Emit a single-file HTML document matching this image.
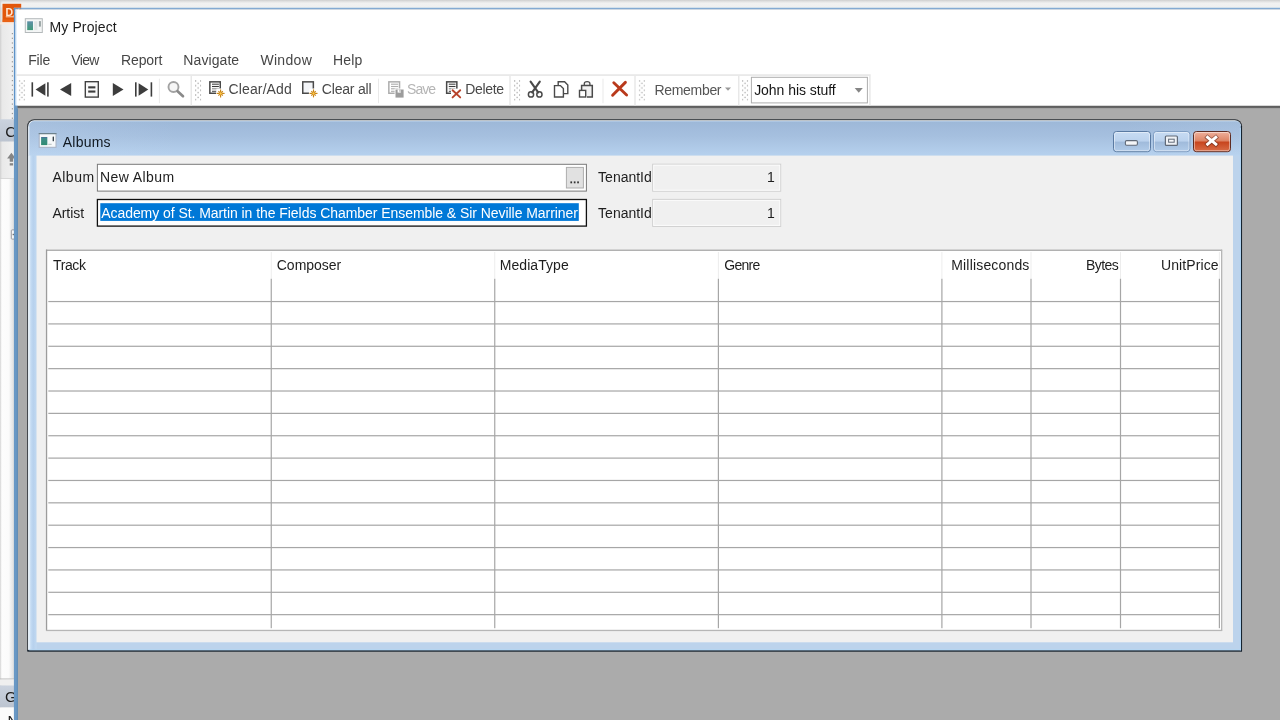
<!DOCTYPE html>
<html><head><meta charset="utf-8"><title>My Project</title>
<style>
html,body{margin:0;padding:0;background:#ababab;}
body{width:1280px;height:720px;overflow:hidden;font-family:"Liberation Sans",sans-serif;}
svg{display:block;position:absolute;left:0;top:0;will-change:transform;}
svg text{font-family:"Liberation Sans",sans-serif;white-space:pre;}
</style></head><body>
<svg width="1280" height="720" viewBox="0 0 1280 720">
<defs>
<linearGradient id="gTop" x1="0" y1="0" x2="0" y2="1"><stop offset="0" stop-color="#cfcfcf"/><stop offset="0.18" stop-color="#e2e2e2"/><stop offset="0.36" stop-color="#f1f1f1"/><stop offset="0.72" stop-color="#f0f0f0"/><stop offset="1" stop-color="#e2e2e2"/></linearGradient>
<linearGradient id="gLeft" x1="0" y1="0" x2="1" y2="0"><stop offset="0" stop-color="#dedede"/><stop offset="0.15" stop-color="#e9e9e9"/><stop offset="1" stop-color="#f1f1f1"/></linearGradient>
<linearGradient id="gTitle" x1="0" y1="0" x2="0" y2="1"><stop offset="0" stop-color="#9db8d8"/><stop offset="0.45" stop-color="#a6c0df"/><stop offset="1" stop-color="#b6d1ee"/></linearGradient>
<linearGradient id="gTitleL" x1="0" y1="0" x2="1" y2="0"><stop offset="0" stop-color="#cfe2f6" stop-opacity="0.18"/><stop offset="1" stop-color="#cfe2f6" stop-opacity="0"/></linearGradient>
<linearGradient id="gTitleR" x1="1" y1="0" x2="0" y2="0"><stop offset="0" stop-color="#cfe2f6" stop-opacity="0.12"/><stop offset="1" stop-color="#cfe2f6" stop-opacity="0"/></linearGradient>
<linearGradient id="gDark" x1="0" y1="0" x2="0" y2="1"><stop offset="0" stop-color="#c8c8c8"/><stop offset="0.3" stop-color="#5e5e5e"/><stop offset="0.7" stop-color="#666666"/><stop offset="1" stop-color="#ababab"/></linearGradient>
<linearGradient id="gBtn" x1="0" y1="0" x2="0" y2="1"><stop offset="0" stop-color="#c8dcf3"/><stop offset="0.47" stop-color="#bbd2ed"/><stop offset="0.53" stop-color="#a0bbdb"/><stop offset="1" stop-color="#b2cce9"/></linearGradient>
<linearGradient id="gClose" x1="0" y1="0" x2="0" y2="1"><stop offset="0" stop-color="#efb29e"/><stop offset="0.46" stop-color="#dd8465"/><stop offset="0.53" stop-color="#c8451e"/><stop offset="1" stop-color="#d96f49"/></linearGradient>
<linearGradient id="gIcon" x1="0" y1="0" x2="0" y2="1"><stop offset="0" stop-color="#5f8fa8"/><stop offset="1" stop-color="#3f9a78"/></linearGradient>
<linearGradient id="gIcon2" x1="0" y1="0" x2="0" y2="1"><stop offset="0" stop-color="#4a6a9a"/><stop offset="0.2" stop-color="#3f8d88"/><stop offset="1" stop-color="#2f8c72"/></linearGradient>
<linearGradient id="gLeftW" x1="0" y1="0" x2="1" y2="0"><stop offset="0" stop-color="#fdfdfd"/><stop offset="0.6" stop-color="#fbfbfb"/><stop offset="1" stop-color="#dcdcdc"/></linearGradient>
<linearGradient id="gTab" x1="0" y1="0" x2="0" y2="1"><stop offset="0" stop-color="#cad2de"/><stop offset="1" stop-color="#bcc4d0"/></linearGradient>
<linearGradient id="gBandL" x1="0" y1="0" x2="1" y2="0"><stop offset="0" stop-color="#eef6fd"/><stop offset="0.17" stop-color="#e0edf9"/><stop offset="0.3" stop-color="#c4dbf3"/><stop offset="0.6" stop-color="#b7d1ed"/><stop offset="1" stop-color="#c0d8f1"/></linearGradient>
<pattern id="grip" x="0" y="0" width="5" height="4.7" patternUnits="userSpaceOnUse"><rect x="0" y="0.3" width="1.25" height="1.25" fill="#a4a4a4"/><rect x="2.5" y="2.65" width="1.25" height="1.25" fill="#a4a4a4"/></pattern>
</defs>
<rect x="0" y="0" width="1280" height="720" fill="#ababab"/>
<rect x="0" y="0" width="1280" height="9" fill="url(#gTop)"/>
<rect x="0" y="8" width="14.5" height="712" fill="url(#gLeft)"/>
<rect x="0" y="178.5" width="14.5" height="500.5" fill="url(#gLeftW)"/>
<rect x="0" y="178" width="14.5" height="1" fill="#d8d8d8"/>
<rect x="0" y="0" width="1.2" height="720" fill="#d0d0d0" opacity="0.7"/>
<rect x="0" y="119.3" width="14.5" height="22.2" fill="url(#gTab)"/>
<rect x="0" y="678.5" width="14.5" height="1" fill="#b8b8b8"/>
<rect x="0" y="679.5" width="14.5" height="6" fill="#efefef"/>
<rect x="0" y="685.5" width="14.5" height="22" fill="url(#gTab)"/>
<rect x="0" y="707.5" width="14.5" height="13" fill="#fbfbfb"/>
<text x="5.2" y="136.6" font-size="15" fill="#1a1a1a" text-anchor="start">C</text>
<text x="5" y="702" font-size="15" fill="#1a1a1a" text-anchor="start">G</text>
<text x="7.5" y="726" font-size="15" fill="#1a1a1a" text-anchor="start">N</text>
<rect x="11.8" y="33.0" width="1.2" height="1.2" fill="#9a9a9a"/>
<rect x="11.8" y="37.7" width="1.2" height="1.2" fill="#9a9a9a"/>
<rect x="11.8" y="42.4" width="1.2" height="1.2" fill="#9a9a9a"/>
<rect x="11.8" y="47.1" width="1.2" height="1.2" fill="#9a9a9a"/>
<rect x="11.8" y="51.8" width="1.2" height="1.2" fill="#9a9a9a"/>
<rect x="11.8" y="56.5" width="1.2" height="1.2" fill="#9a9a9a"/>
<rect x="11.8" y="61.2" width="1.2" height="1.2" fill="#9a9a9a"/>
<rect x="11.8" y="65.9" width="1.2" height="1.2" fill="#9a9a9a"/>
<rect x="11.8" y="70.6" width="1.2" height="1.2" fill="#9a9a9a"/>
<rect x="11.8" y="75.30000000000001" width="1.2" height="1.2" fill="#9a9a9a"/>
<rect x="11.8" y="80.0" width="1.2" height="1.2" fill="#9a9a9a"/>
<rect x="11.8" y="84.7" width="1.2" height="1.2" fill="#9a9a9a"/>
<rect x="11.8" y="89.4" width="1.2" height="1.2" fill="#9a9a9a"/>
<rect x="11.8" y="94.1" width="1.2" height="1.2" fill="#9a9a9a"/>
<rect x="11.8" y="98.8" width="1.2" height="1.2" fill="#9a9a9a"/>
<rect x="11.8" y="103.5" width="1.2" height="1.2" fill="#9a9a9a"/>
<rect x="11.8" y="108.2" width="1.2" height="1.2" fill="#9a9a9a"/>
<rect x="11.8" y="112.9" width="1.2" height="1.2" fill="#9a9a9a"/>
<rect x="11.8" y="117.60000000000001" width="1.2" height="1.2" fill="#9a9a9a"/>
<path d="M11.4 152.8 L7.1 158.5 H9.7 V161.8 H13.1 V158.5 H15.7 Z" fill="#858585"/><rect x="9.7" y="163.2" width="3.4" height="2.3" fill="#858585"/>
<rect x="11.3" y="229.9" width="5" height="9.2" rx="0.8" fill="#f8f8f8" stroke="#9a9aa0" stroke-width="1"/>
<rect x="12.6" y="233.8" width="1.6" height="1.4" fill="#707070"/>
<rect x="2.5" y="3.8" width="18.7" height="18.4" fill="#e2560a"/>
<rect x="2.5" y="19.5" width="18.7" height="2.7" fill="#ee6a1c" opacity="0.6"/>
<text x="5.6" y="16.2" font-size="10.5" fill="#ffe8d4" text-anchor="start" font-weight="bold">DX</text>
<rect x="5.8" y="16.3" width="9" height="1" fill="#ffd9bd"/>
<rect x="0" y="22.2" width="22" height="2.3" fill="#fbe9dc" opacity="0.8"/>
<rect x="13.9" y="7.7" width="1267" height="0.8" fill="#a4ccef"/>
<rect x="13.9" y="8.4" width="1267" height="1.05" fill="#5a8cc2"/>
<rect x="13.9" y="7.9" width="1.7" height="98" fill="#5d93c9"/>
<rect x="15.6" y="9.4" width="1265" height="96.3" fill="#ffffff"/>
<rect x="15.6" y="9.4" width="1.2" height="96.3" fill="#ddeeff"/>
<rect x="13.9" y="105.6" width="3.9" height="615" fill="#6998c5"/>
<rect x="16.8" y="108" width="1.0" height="612" fill="#5f8ab4"/>
<rect x="17.5" y="105.5" width="1263" height="3.2" fill="url(#gDark)"/>
<rect x="25.3" y="18.7" width="17" height="13.8" fill="#f4f6f6" stroke="#b4b9bb" stroke-width="1"/>
<rect x="27.2" y="21.3" width="5.78" height="8.8" fill="url(#gIcon)"/>
<rect x="34.14" y="21.3" width="3.23" height="8.8" fill="#e2e6e6"/>
<rect x="38.900000000000006" y="21.099999999999998" width="2.04" height="5.5200000000000005" fill="#9aa6a6"/>
<text x="49.48" y="32" font-size="14" fill="#1c1c1c" text-anchor="start" textLength="67.27" lengthAdjust="spacing">My Project</text>
<text x="28.15" y="65" font-size="14" fill="#464646" text-anchor="start" textLength="22.08" lengthAdjust="spacing">File</text>
<text x="71.25" y="65" font-size="14" fill="#464646" text-anchor="start" textLength="28.23" lengthAdjust="spacing">View</text>
<text x="121.10" y="65" font-size="14" fill="#464646" text-anchor="start" textLength="41.19" lengthAdjust="spacing">Report</text>
<text x="183.36" y="65" font-size="14" fill="#464646" text-anchor="start" textLength="55.78" lengthAdjust="spacing">Navigate</text>
<text x="260.40" y="65" font-size="14" fill="#464646" text-anchor="start" textLength="51.40" lengthAdjust="spacing">Window</text>
<text x="332.89" y="65" font-size="14" fill="#464646" text-anchor="start" textLength="29.53" lengthAdjust="spacing">Help</text>
<rect x="16" y="74.2" width="854.7" height="1.8" fill="#e9e9e9"/>
<rect x="190.55" y="76" width="1.4" height="29.5" fill="#e7e7e7"/>
<rect x="509.3" y="76" width="1.4" height="29.5" fill="#e7e7e7"/>
<rect x="634.3" y="76" width="1.4" height="29.5" fill="#e7e7e7"/>
<rect x="738.05" y="76" width="1.4" height="29.5" fill="#e7e7e7"/>
<rect x="869.1999999999999" y="76" width="1.4" height="29.5" fill="#e7e7e7"/>
<rect x="158.9" y="78.7" width="1" height="24.5" fill="#e9e9e9"/>
<rect x="378.0" y="78.7" width="1" height="24.5" fill="#e9e9e9"/>
<rect x="602.5" y="78.7" width="1" height="24.5" fill="#e9e9e9"/>
<rect x="0" y="0" width="6.3" height="20.6" fill="url(#grip)" transform="translate(18.75,80)"/>
<rect x="0" y="0" width="6.3" height="20.6" fill="url(#grip)" transform="translate(195,80)"/>
<rect x="0" y="0" width="6.3" height="20.6" fill="url(#grip)" transform="translate(514,80)"/>
<rect x="0" y="0" width="6.3" height="20.6" fill="url(#grip)" transform="translate(638.75,80)"/>
<rect x="0" y="0" width="6.3" height="20.6" fill="url(#grip)" transform="translate(741.9,80)"/>
<rect x="31.5" y="82.3" width="1.6" height="14.3" fill="#3d3d3d"/>
<rect x="47.1" y="82.3" width="1.6" height="14.3" fill="#3d3d3d"/>
<path d="M35.6 89.45 L45.4 83.2 V95.7 Z" fill="#3d3d3d"/>
<path d="M60 89.45 L71.2 83 V95.9 Z" fill="#3d3d3d"/>
<rect x="85.3" y="81.7" width="13" height="15.4" fill="#f8f8f8" stroke="#3d3d3d" stroke-width="1.35"/>
<rect x="88.2" y="86.3" width="7.2" height="2.1" fill="#3d3d3d"/>
<rect x="88.2" y="90.5" width="7.2" height="2.1" fill="#3d3d3d"/>
<path d="M123.5 89.45 L112.8 83 V95.9 Z" fill="#3d3d3d"/>
<rect x="135" y="82.3" width="1.6" height="14.3" fill="#3d3d3d"/>
<rect x="150.6" y="82.3" width="1.6" height="14.3" fill="#3d3d3d"/>
<path d="M148.3 89.45 L138.6 83.2 V95.7 Z" fill="#3d3d3d"/>
<circle cx="173.5" cy="87" r="5" fill="#f6f6f6" stroke="#a2a2a2" stroke-width="1.9"/>
<line x1="177.6" y1="91.2" x2="183" y2="96.2" stroke="#8a8a8a" stroke-width="2.7" stroke-linecap="round"/>
<rect x="209.85" y="81.85" width="10.4" height="11.4" fill="#fff" stroke="#484848" stroke-width="1.5"/>
<rect x="212.0" y="83.64999999999999" width="6.9" height="1.1" fill="#4a4a4a"/>
<rect x="212.0" y="85.95" width="6.9" height="1.1" fill="#3c3c3c"/>
<rect x="212.0" y="88.25" width="6.9" height="1.1" fill="#8c8c8c"/>
<rect x="212.0" y="90.75" width="6.9" height="1.1" fill="#505050"/>
<circle cx="220.6" cy="93.4" r="4.6" fill="#fff"/>
<rect x="216.4" y="88.60000000000001" width="9" height="9.6" fill="#fff"/>
<line x1="216.60" y1="93.40" x2="224.60" y2="93.40" stroke="#c9861a" stroke-width="1.15"/>
<line x1="218.39" y1="91.19" x2="222.81" y2="95.61" stroke="#c9861a" stroke-width="1.15"/>
<line x1="220.60" y1="89.40" x2="220.60" y2="97.40" stroke="#c9861a" stroke-width="1.15"/>
<line x1="222.81" y1="91.19" x2="218.39" y2="95.61" stroke="#c9861a" stroke-width="1.15"/>
<circle cx="220.6" cy="93.4" r="1.5" fill="#ffc94a" stroke="#c9861a" stroke-width="0.7"/>
<text x="228.61" y="93.75" font-size="14" fill="#484848" text-anchor="start" textLength="63.15" lengthAdjust="spacing">Clear/Add</text>
<rect x="302.75" y="81.85" width="10.6" height="11.4" fill="#f3f5f8" stroke="#4a4a4a" stroke-width="1.5"/>
<circle cx="313.5" cy="93.4" r="4.6" fill="#fff"/>
<rect x="309.3" y="88.60000000000001" width="9" height="9.6" fill="#fff"/>
<line x1="309.50" y1="93.40" x2="317.50" y2="93.40" stroke="#c9861a" stroke-width="1.15"/>
<line x1="311.29" y1="91.19" x2="315.71" y2="95.61" stroke="#c9861a" stroke-width="1.15"/>
<line x1="313.50" y1="89.40" x2="313.50" y2="97.40" stroke="#c9861a" stroke-width="1.15"/>
<line x1="315.71" y1="91.19" x2="311.29" y2="95.61" stroke="#c9861a" stroke-width="1.15"/>
<circle cx="313.5" cy="93.4" r="1.5" fill="#ffc94a" stroke="#c9861a" stroke-width="0.7"/>
<text x="321.82" y="93.75" font-size="14" fill="#484848" text-anchor="start" textLength="49.72" lengthAdjust="spacing">Clear all</text>
<rect x="388.85" y="81.85" width="10.7" height="11.4" fill="#fff" stroke="#adadad" stroke-width="1.5"/>
<rect x="391.0" y="83.64999999999999" width="7.199999999999999" height="1.1" fill="#adadad"/>
<rect x="391.0" y="85.95" width="7.199999999999999" height="1.1" fill="#adadad"/>
<rect x="391.0" y="88.25" width="7.199999999999999" height="1.1" fill="#adadad"/>
<rect x="391.0" y="90.75" width="7.199999999999999" height="1.1" fill="#adadad"/>
<rect x="394.6" y="88.5" width="9.6" height="9.6" fill="#fff"/>
<path d="M395.5 89.5 H403.6 V97.6 H395.5 Z" fill="#9c9c9c"/>
<rect x="397.6" y="89.5" width="3.2" height="3.1" fill="#ffffff"/>
<rect x="399.4" y="89.5" width="1.1" height="2.3" fill="#a8a8a8"/>
<text x="407.00" y="93.75" font-size="14" fill="#b5b5b5" text-anchor="start" textLength="29.11" lengthAdjust="spacing">Save</text>
<rect x="446.65" y="81.85" width="10.2" height="11.4" fill="#fff" stroke="#484848" stroke-width="1.5"/>
<rect x="448.79999999999995" y="83.64999999999999" width="6.699999999999999" height="1.1" fill="#4a4a4a"/>
<rect x="448.79999999999995" y="85.95" width="6.699999999999999" height="1.1" fill="#3c3c3c"/>
<rect x="448.79999999999995" y="88.25" width="6.699999999999999" height="1.1" fill="#8c8c8c"/>
<rect x="448.79999999999995" y="90.75" width="6.699999999999999" height="1.1" fill="#505050"/>
<rect x="451" y="88.6" width="8" height="8" fill="#fff"/>
<path d="M452.6 90.2 L460.2 97.4 M460.2 90.2 L452.6 97.4" stroke="#b8432a" stroke-width="1.9" stroke-linecap="round" fill="none"/>
<text x="465.36" y="93.75" font-size="14" fill="#484848" text-anchor="start" textLength="38.60" lengthAdjust="spacing">Delete</text>
<path d="M530.6 81.6 L538.2 92.4 M539.8 81.6 L532.2 92.4" stroke="#4a4a4a" stroke-width="2.1" fill="none" stroke-linecap="round"/>
<circle cx="531" cy="94.4" r="2.6" fill="none" stroke="#4a4a4a" stroke-width="1.5"/><circle cx="539.4" cy="94.4" r="2.6" fill="none" stroke="#4a4a4a" stroke-width="1.5"/>
<path d="M558.2 85 V81.8 H564.6 L567.8 85 V93.6 H563.6" fill="#fff" stroke="#4a4a4a" stroke-width="1.4"/>
<path d="M554.5 85.6 H560.4 L563.4 88.6 V97 H554.5 Z" fill="#fff" stroke="#4a4a4a" stroke-width="1.4"/>
<path d="M584.3 85.4 V83.6 Q584.3 81.7 587.1 81.7 Q589.9 81.7 589.9 83.6 V85.4" fill="#f4f4f4" stroke="#4a4a4a" stroke-width="1.3"/>
<path d="M581.6 90.6 V85.6 H592.3 V97 H587" fill="#f2f2f2" stroke="#4a4a4a" stroke-width="1.5"/>
<rect x="579.5" y="90.4" width="6.2" height="6.6" fill="#fff" stroke="#4a4a4a" stroke-width="1.4"/>
<path d="M613.8 82.8 L626.6 95 M625.4 82.4 L612.6 95.2" stroke="#b93a1c" stroke-width="2.9" stroke-linecap="round" fill="none"/>
<text x="654.38" y="94.75" font-size="14" fill="#555555" text-anchor="start" textLength="67.16" lengthAdjust="spacing">Remember</text>
<path d="M725 87.4 H731 L728 90.7 Z" fill="#9a9a9a"/>
<rect x="751.4" y="77.3" width="116" height="25.6" fill="#fff" stroke="#adadad" stroke-width="1"/>
<text x="754.16" y="94.75" font-size="14" fill="#151515" text-anchor="start" textLength="81.58" lengthAdjust="spacing">John his stuff</text>
<path d="M854.7 88 H862.8 L858.75 92.7 Z" fill="#868686"/>
<path d="M34.2 119.2 H1235.0 A7 7 0 0 1 1242.0 126.2 V650.6 A0.8 0.8 0 0 1 1241.2 651.4 H28.0 A0.8 0.8 0 0 1 27.2 650.6 V126.2 A7 7 0 0 1 34.2 119.2 Z" fill="#2b3036"/>
<path d="M34.2 120.2 H1234.9 A6 6 0 0 1 1240.9 126.2 V650.0 A0.3 0.3 0 0 1 1240.6000000000001 650.3 H28.5 A0.3 0.3 0 0 1 28.2 650.0 V126.2 A6 6 0 0 1 34.2 120.2 Z" fill="#eef5fc"/>
<path d="M34.2 121.2 H1235.9 A5 5 0 0 1 1240.9 126.2 V650.0 A0.3 0.3 0 0 1 1240.6000000000001 650.3 H29.5 A0.3 0.3 0 0 1 29.2 650.0 V126.2 A5 5 0 0 1 34.2 121.2 Z" fill="#bcd3ec"/>
<clipPath id="cpT"><path d="M34.2 121.2 H1235.9 A5 5 0 0 1 1240.9 126.2 V650.0 A0.3 0.3 0 0 1 1240.6000000000001 650.3 H29.5 A0.3 0.3 0 0 1 29.2 650.0 V126.2 A5 5 0 0 1 34.2 121.2 Z"/></clipPath>
<g clip-path="url(#cpT)"><rect x="29.2" y="121.2" width="1211.8" height="34.39999999999999" fill="url(#gTitle)"/><rect x="29.2" y="121.2" width="150" height="34.39999999999999" fill="url(#gTitleL)"/><rect x="1121.0" y="121.2" width="120" height="34.39999999999999" fill="url(#gTitleR)"/></g>
<rect x="1240.9" y="126" width="1.15" height="525.4" fill="#15232f"/>
<rect x="27.2" y="650.3" width="1214.8" height="1.15" fill="#15232f"/>
<rect x="1239.9" y="128" width="1.0" height="522.3" fill="#aed4f4"/>
<rect x="29.2" y="649.3" width="1211.7" height="1.0" fill="#b4d6f3"/>
<rect x="28.2" y="155.5" width="8.4" height="493.8" fill="url(#gBandL)"/>
<rect x="28.2" y="126.5" width="1.2" height="29" fill="#e3eefa" opacity="0.85"/>
<rect x="36.5" y="155.6" width="1196.5" height="486.7" fill="#f0f0f0"/>
<rect x="39.2" y="133.6" width="16.8" height="13.7" fill="#f6f9fa"/>
<rect x="39.2" y="133.6" width="16.8" height="13.7" fill="none" stroke="#a7b1c2" stroke-width="1"/>
<rect x="38.7" y="133.0" width="17.8" height="1.2" fill="#6d828c"/>
<rect x="41.1" y="137.0" width="6.216" height="8.1" fill="url(#gIcon2)"/>
<rect x="52.64" y="136.4" width="1.3" height="4.9319999999999995" rx="0.5" fill="#2e3840"/>
<rect x="48.272000000000006" y="143.79999999999998" width="3.3600000000000003" height="1" fill="#b4bcbc"/>
<text x="62.73" y="146.6" font-size="14" fill="#101820" text-anchor="start" textLength="47.87" lengthAdjust="spacing">Albums</text>
<rect x="1113.5" y="131.5" width="37" height="20.2" rx="3" ry="3" fill="url(#gBtn)" stroke="#5a7aa2" stroke-width="1"/>
<rect x="1114.5" y="132.5" width="35" height="18.2" rx="2" ry="2" fill="none" stroke="#ffffff" stroke-opacity="0.45" stroke-width="1"/>
<rect x="1153.5" y="131.5" width="36.40000000000009" height="20.2" rx="3" ry="3" fill="url(#gBtn)" stroke="#7f9dc2" stroke-width="1"/>
<rect x="1154.5" y="132.5" width="34.40000000000009" height="18.2" rx="2" ry="2" fill="none" stroke="#ffffff" stroke-opacity="0.45" stroke-width="1"/>
<rect x="1193.5" y="131.5" width="37" height="20.2" rx="3" ry="3" fill="url(#gClose)" stroke="#5e2c22" stroke-width="1"/>
<rect x="1194.5" y="132.5" width="35" height="18.2" rx="2" ry="2" fill="none" stroke="#ffffff" stroke-opacity="0.45" stroke-width="1"/>
<rect x="1125.4" y="140.6" width="12" height="4.6" rx="1.2" fill="#f4f6f8" stroke="#606a78" stroke-width="1.1"/>
<rect x="1165.4" y="136" width="12" height="9.4" rx="1" fill="#eef1f5" stroke="#606a78" stroke-width="1.2"/>
<rect x="1168.6" y="139.2" width="5.6" height="3" fill="#f8f9fb" stroke="#606a78" stroke-width="1"/>
<path d="M1207.6 137.4 L1215.8 144.2 M1215.8 137.4 L1207.6 144.2" stroke="#5a2216" stroke-width="4.6" stroke-linecap="square" fill="none" opacity="0.55"/>
<path d="M1207.6 137.4 L1215.8 144.2 M1215.8 137.4 L1207.6 144.2" stroke="#ffffff" stroke-width="2.9" stroke-linecap="square" fill="none"/>
<text x="52.42" y="182" font-size="14" fill="#1e1e1e" text-anchor="start" textLength="41.66" lengthAdjust="spacing">Album</text>
<text x="52.42" y="218" font-size="14" fill="#1e1e1e" text-anchor="start" textLength="31.72" lengthAdjust="spacing">Artist</text>
<rect x="97.4" y="164.3" width="489" height="26.8" fill="#fff" stroke="#7a7a7a" stroke-width="1"/>
<text x="99.98" y="182" font-size="14" fill="#1e1e1e" text-anchor="start" textLength="74.07" lengthAdjust="spacing">New Album</text>
<rect x="566.4" y="167.4" width="17" height="20.6" fill="#e1e1e1" stroke="#adadad" stroke-width="1"/>
<rect x="570.4" y="181.4" width="1.7" height="1.9" fill="#333"/>
<rect x="573.8" y="181.4" width="1.7" height="1.9" fill="#333"/>
<rect x="577.1999999999999" y="181.4" width="1.7" height="1.9" fill="#333"/>
<rect x="97.4" y="199.5" width="489" height="26.6" fill="#fff" stroke="#101010" stroke-width="1.3"/>
<rect x="100.3" y="203.2" width="478.5" height="17.7" fill="#0078d7"/>
<text x="101.20" y="218" font-size="14" fill="#ffffff" text-anchor="start" textLength="476.80" lengthAdjust="spacing">Academy of St. Martin in the Fields Chamber Ensemble &amp; Sir Neville Marriner</text>
<text x="598.12" y="182" font-size="14" fill="#1e1e1e" text-anchor="start" textLength="53.68" lengthAdjust="spacing">TenantId</text>
<rect x="652.7" y="164.2" width="128" height="27" fill="#f0f0f0" stroke="#cfcfcf" stroke-width="1"/>
<rect x="653.7" y="165.2" width="126" height="25" fill="none" stroke="#fbfbfb" stroke-width="1"/>
<text x="774.9" y="182" font-size="14" fill="#1e1e1e" text-anchor="end">1</text>
<text x="598.12" y="218" font-size="14" fill="#1e1e1e" text-anchor="start" textLength="53.68" lengthAdjust="spacing">TenantId</text>
<rect x="652.7" y="199.4" width="128" height="27" fill="#f0f0f0" stroke="#cfcfcf" stroke-width="1"/>
<rect x="653.7" y="200.4" width="126" height="25" fill="none" stroke="#fbfbfb" stroke-width="1"/>
<text x="774.9" y="218" font-size="14" fill="#1e1e1e" text-anchor="end">1</text>
<rect x="46.5" y="250.2" width="1175.1" height="380.2" fill="#ffffff"/>
<rect x="46.0" y="249.6" width="1176.1" height="1.3" fill="#a9a9a9"/>
<rect x="45.9" y="249.6" width="1.3" height="381.2" fill="#9c9c9c"/>
<rect x="1221.0" y="249.6" width="1.3" height="381.4" fill="#b6b6b6"/>
<rect x="46.0" y="629.8" width="1176.1" height="1.3" fill="#b6b6b6"/>
<rect x="270.75" y="252" width="1" height="27" fill="#ededed"/>
<rect x="270.65" y="278.8" width="1.2" height="349.4" fill="#a6a6a6"/>
<rect x="494.25" y="252" width="1" height="27" fill="#ededed"/>
<rect x="494.15" y="278.8" width="1.2" height="349.4" fill="#a6a6a6"/>
<rect x="717.9" y="252" width="1" height="27" fill="#ededed"/>
<rect x="717.8" y="278.8" width="1.2" height="349.4" fill="#a6a6a6"/>
<rect x="941.4" y="252" width="1" height="27" fill="#ededed"/>
<rect x="941.3" y="278.8" width="1.2" height="349.4" fill="#a6a6a6"/>
<rect x="1030.5" y="252" width="1" height="27" fill="#ededed"/>
<rect x="1030.4" y="278.8" width="1.2" height="349.4" fill="#a6a6a6"/>
<rect x="1120.0" y="252" width="1" height="27" fill="#ededed"/>
<rect x="1119.9" y="278.8" width="1.2" height="349.4" fill="#a6a6a6"/>
<rect x="1218.9" y="252" width="1" height="27" fill="#ededed"/>
<rect x="1218.8000000000002" y="278.8" width="1.2" height="349.4" fill="#a6a6a6"/>
<rect x="48.3" y="300.95" width="1171.6" height="1.2" fill="#a6a6a6"/>
<rect x="48.3" y="323.315" width="1171.6" height="1.2" fill="#a6a6a6"/>
<rect x="48.3" y="345.68" width="1171.6" height="1.2" fill="#a6a6a6"/>
<rect x="48.3" y="368.04499999999996" width="1171.6" height="1.2" fill="#a6a6a6"/>
<rect x="48.3" y="390.40999999999997" width="1171.6" height="1.2" fill="#a6a6a6"/>
<rect x="48.3" y="412.775" width="1171.6" height="1.2" fill="#a6a6a6"/>
<rect x="48.3" y="435.14" width="1171.6" height="1.2" fill="#a6a6a6"/>
<rect x="48.3" y="457.505" width="1171.6" height="1.2" fill="#a6a6a6"/>
<rect x="48.3" y="479.87" width="1171.6" height="1.2" fill="#a6a6a6"/>
<rect x="48.3" y="502.235" width="1171.6" height="1.2" fill="#a6a6a6"/>
<rect x="48.3" y="524.6" width="1171.6" height="1.2" fill="#a6a6a6"/>
<rect x="48.3" y="546.965" width="1171.6" height="1.2" fill="#a6a6a6"/>
<rect x="48.3" y="569.33" width="1171.6" height="1.2" fill="#a6a6a6"/>
<rect x="48.3" y="591.695" width="1171.6" height="1.2" fill="#a6a6a6"/>
<rect x="48.3" y="614.06" width="1171.6" height="1.2" fill="#a6a6a6"/>
<text x="53.12" y="270" font-size="14" fill="#1e1e1e" text-anchor="start" textLength="32.76" lengthAdjust="spacing">Track</text>
<text x="276.77" y="270" font-size="14" fill="#1e1e1e" text-anchor="start" textLength="64.43" lengthAdjust="spacing">Composer</text>
<text x="499.76" y="270" font-size="14" fill="#1e1e1e" text-anchor="start" textLength="68.92" lengthAdjust="spacing">MediaType</text>
<text x="724.22" y="270" font-size="14" fill="#1e1e1e" text-anchor="start" textLength="36.08" lengthAdjust="spacing">Genre</text>
<text x="951.26" y="270" font-size="14" fill="#1e1e1e" text-anchor="start" textLength="78.09" lengthAdjust="spacing">Milliseconds</text>
<text x="1085.96" y="270" font-size="14" fill="#1e1e1e" text-anchor="start" textLength="32.79" lengthAdjust="spacing">Bytes</text>
<text x="1161.01" y="270" font-size="14" fill="#1e1e1e" text-anchor="start" textLength="57.52" lengthAdjust="spacing">UnitPrice</text>
</svg>
</body></html>
